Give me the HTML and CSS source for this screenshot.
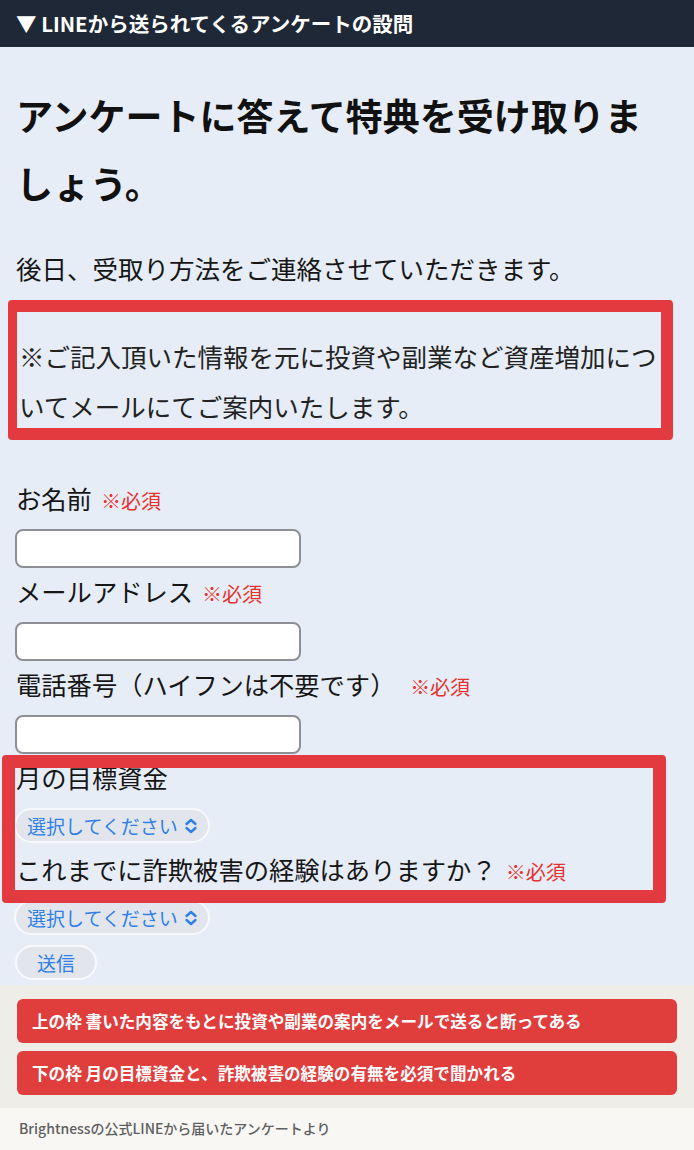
FILE: index.html
```html
<!DOCTYPE html>
<html lang="ja">
<head>
<meta charset="utf-8">
<title>LINEから送られてくるアンケートの設問</title>
<link rel="stylesheet" href="styles.css">
</head>
<body>
<div class="header">▼ LINEから送られてくるアンケートの設問</div>
<div class="shot">
  <h1 class="title">アンケートに答えて特典を受け取りましょう。</h1>
  <p class="lead">後日、受取り方法をご連絡させていただきます。</p>
  <p class="notice">※ご記入頂いた情報を元に投資や副業など資産増加についてメールにてご案内いたします。</p>
  <div class="form">
    <div class="label">お名前<span class="req">※必須</span></div>
    <div class="input"></div>
    <div class="label">メールアドレス<span class="req">※必須</span></div>
    <div class="input"></div>
    <div class="label">電話番号（ハイフンは不要です） <span class="req">※必須</span></div>
    <div class="input"></div>
    <div class="label">月の目標資金</div>
    <div class="select">選択してください<svg class="chev" viewBox="0 0 14 16" width="14" height="16"><path d="M2.5 6 L7 2 L11.5 6 M2.5 10 L7 14 L11.5 10" fill="none" stroke="#2f7fe6" stroke-width="2.4" stroke-linecap="round" stroke-linejoin="round"/></svg></div>
    <div class="label">これまでに詐欺被害の経験はありますか？<span class="req">※必須</span></div>
    <div class="select">選択してください<svg class="chev" viewBox="0 0 14 16" width="14" height="16"><path d="M2.5 6 L7 2 L11.5 6 M2.5 10 L7 14 L11.5 10" fill="none" stroke="#2f7fe6" stroke-width="2.4" stroke-linecap="round" stroke-linejoin="round"/></svg></div>
    <div class="send">送信</div>
  </div>
  <div class="mark mark-top"></div>
  <div class="mark mark-bottom"></div>
</div>
<div class="notes">
  <div class="bar">上の枠 書いた内容をもとに投資や副業の案内をメールで送ると断ってある</div>
  <div class="bar">下の枠 月の目標資金と、詐欺被害の経験の有無を必須で聞かれる</div>
</div>
<div class="caption">Brightnessの公式LINEから届いたアンケートより</div>
</body>
</html>
```
FILE: styles.css
```css
* { box-sizing: border-box; }
html, body { margin: 0; padding: 0; }
body {
  font-family: "Noto Sans CJK JP", "Noto Sans", sans-serif;
  background: #f8f7f4;
  width: 694px;
}
.header {
  height: 47px;
  background: #1f2836;
  color: #fff;
  font-size: 20.5px;
  font-weight: 700;
  display: flex;
  align-items: center;
  padding-left: 16px;
  line-height: 1;
}
.shot {
  position: relative;
  background: #e6edf6;
  padding: 34px 30px 5px 16px;
  color: #161616;
}
.title {
  margin: 0;
  font-size: 37px;
  line-height: 68px;
  font-weight: 700;
  color: #111;
}
.lead {
  margin: 26px 0 0;
  font-size: 25.5px;
  line-height: 50px;
}
.notice {
  margin: 38px 0 0;
  padding-left: 3px;
  font-size: 25.5px;
  line-height: 50px;
  color: #222;
}
.form {
  margin-top: 44px;
  display: flex;
  flex-direction: column;
  align-items: flex-start;
}
.label {
  font-size: 25.3px;
  line-height: 46px;
  height: 46px;
  color: #161616;
  white-space: nowrap;
}
.req {
  color: #e5322f;
  font-size: 20px;
  line-height: 1;
  margin-left: 9px;
}
.input {
  margin-top: 8px;
  width: 286px;
  height: 39px;
  background: #fff;
  border: 2px solid #8d8f94;
  border-radius: 8px;
  margin-left: -1px;
}
.select {
  margin-top: 8px;
  margin-bottom: 3px;
  margin-left: -2px;
  height: 35px;
  display: inline-flex;
  align-items: center;
  gap: 6px;
  padding: 0 10px 0 11px;
  background: #e2e6ec;
  border: 2px solid #f7f9fc;
  border-radius: 18px;
  color: #2f7fe6;
  font-size: 19px;
}
.chev { display: block; }
.send {
  margin-top: 7px;
  margin-left: -1px;
  height: 35px;
  display: inline-flex;
  align-items: center;
  padding: 0 20px;
  background: #e2e6ec;
  border: 2px solid #f7f9fc;
  border-radius: 18px;
  color: #2f7fe6;
  font-size: 19px;
}
.mark {
  position: absolute;
  border: 12px solid #e23a3e;
  border-radius: 4px;
}
.mark-top {
  left: 8px;
  top: 253px;
  width: 665px;
  height: 140px;
  border-left-width: 9px;
}
.mark-bottom {
  left: 2px;
  top: 708px;
  width: 664px;
  height: 148px;
  border-width: 13px;
}
.notes {
  background: #efede8;
  padding: 14px 17px 13px;
  display: flex;
  flex-direction: column;
  gap: 8px;
}
.bar {
  height: 44px;
  background: #e03d3d;
  border-radius: 6px;
  color: #fff;
  font-size: 16.6px;
  font-weight: 700;
  display: flex;
  align-items: center;
  padding-left: 15px;
}
.caption {
  height: 42px;
  background: #f8f7f4;
  padding-left: 19px;
  font-size: 14px;
  line-height: 40px;
  color: #5f5f5f;
  font-weight: 500;
}
```
